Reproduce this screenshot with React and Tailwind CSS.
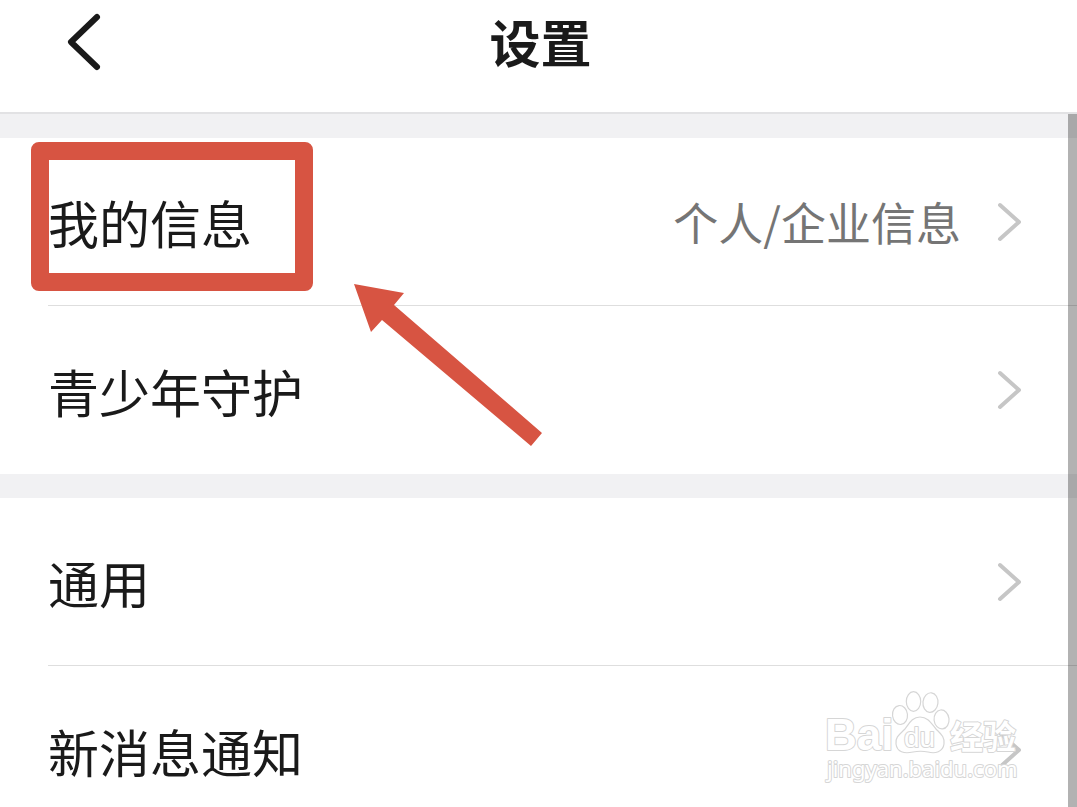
import React from 'react';

// Groups of settings, each one drawn as its own white section
const groups = [
  [
    { label: '我的信息', value: '个人/企业信息', marked: true },
    { label: '青少年守护' },
  ],
  [{ label: '通用' }, { label: '新消息通知' }],
];

// Grey arrow at the end of each row
const Chevron = () => (
  <svg className="h-10 w-6 shrink-0" viewBox="0 0 24 40" fill="none" aria-hidden="true">
    <path d="M3 3 L22 20 L3 37" stroke="#c6c6c6" strokeWidth="4" strokeLinecap="round" strokeLinejoin="round" />
  </svg>
);

// Red frame and pointer drawn over the first row
const Marker = () => (
  <div className="pointer-events-none absolute top-1 left-[31px] z-10">
    <div className="h-[149px] w-[282px] rounded-lg border-[18px] border-[#d75442]" />
    <svg className="absolute top-[142px] left-[323px] h-[162px] w-[188px]" viewBox="0 0 188 162" aria-hidden="true">
      <path d="M0 0 L50 9 L40 21 L188 149 L177 162 L28 36 L17 48 Z" fill="#d75442" />
    </svg>
  </div>
);

const Row = ({ item }) => (
  <li className="relative pl-12">
    <a
      href="#"
      className="flex h-[168px] items-center justify-between border-b border-[#dedede] pr-14"
    >
      <span className="pt-0.5 text-[51px] leading-none text-[#1a1a1a]">{item.label}</span>
      <span className="flex items-center gap-9">
        {item.value && <span className="text-[45px] leading-none text-[#757575]">{item.value}</span>}
        <Chevron />
      </span>
    </a>
    {item.marked && <Marker />}
  </li>
);

// Outlined Baidu Jingyan logo in the bottom corner
const Watermark = () => (
  <svg
    className="pointer-events-none absolute right-14 bottom-5 z-10 h-[100px] w-[200px] overflow-visible"
    viewBox="0 0 200 100"
    fill="#ffffff"
    stroke="#d6d6d6"
    strokeWidth="1.2"
    strokeLinejoin="round"
    aria-hidden="true"
  >
    <g strokeWidth="2" paintOrder="stroke">
      <text x="4" y="63" fontSize="44" fontWeight="bold" fontFamily="Liberation Sans">Bai</text>
      <text x="129" y="62" fontSize="33" fontWeight="bold" fontFamily="Noto Sans CJK SC">经验</text>
      <text x="6" y="90" fontSize="22" fontFamily="Noto Sans">jingyan.baidu.com</text>
    </g>
    <ellipse cx="79" cy="28" rx="7.5" ry="9.5" transform="rotate(-6 79 28)" />
    <ellipse cx="92.5" cy="14.5" rx="7.2" ry="9.8" />
    <ellipse cx="109.5" cy="15.5" rx="7.5" ry="9.8" transform="rotate(6 109 15)" />
    <ellipse cx="120.5" cy="32.5" rx="7.5" ry="9.5" transform="rotate(-6 120 32)" />
    <path d="M99 30 C107 30 110 36 115 42 C120 47 124 50 123 57 C122 65 114 67 107 65 C102 64 97 64 92 65 C83 67 76 65 75 57 C74 50 79 47 84 42 C88 37 91 30 99 30 Z" />
    <text x="83" y="60" fontSize="28" strokeWidth="2" paintOrder="stroke" fontFamily="Liberation Sans">du</text>
  </svg>
);

const App = () => {
  return (
    <div className="relative flex h-screen flex-col overflow-hidden bg-white font-['Noto_Sans_CJK_SC',sans-serif]">
      {/* Title bar with the back button */}
      <header className="grid h-[114px] shrink-0 grid-cols-[1fr_auto_1fr] items-start border-b-2 border-[#e2e2e4] pt-3 pr-15 pl-16">
        <button type="button" aria-label="返回" className="w-10">
          <svg className="h-[60px] w-10" viewBox="0 0 40 60" fill="none" aria-hidden="true">
            <path d="M33 5 L7 30 L33 55" stroke="#1a1a1a" strokeWidth="6" strokeLinecap="round" strokeLinejoin="round" />
          </svg>
        </button>
        <h1 className="pt-1 text-[51px] leading-none font-bold text-[#1a1a1a]">设置</h1>
      </header>

      <main className="relative min-h-0 flex-1 overflow-hidden bg-[#f1f1f3]">
        {groups.map((group) => (
          <ul key={group[0].label} className="mt-6 bg-white [&>li:last-child>a]:border-b-0">
            {group.map((item) => (
              <Row key={item.label} item={item} />
            ))}
          </ul>
        ))}
        <div className="absolute inset-y-0 right-0 w-[9px] bg-black/30" />
      </main>

      <Watermark />
    </div>
  );
};

export default App;
